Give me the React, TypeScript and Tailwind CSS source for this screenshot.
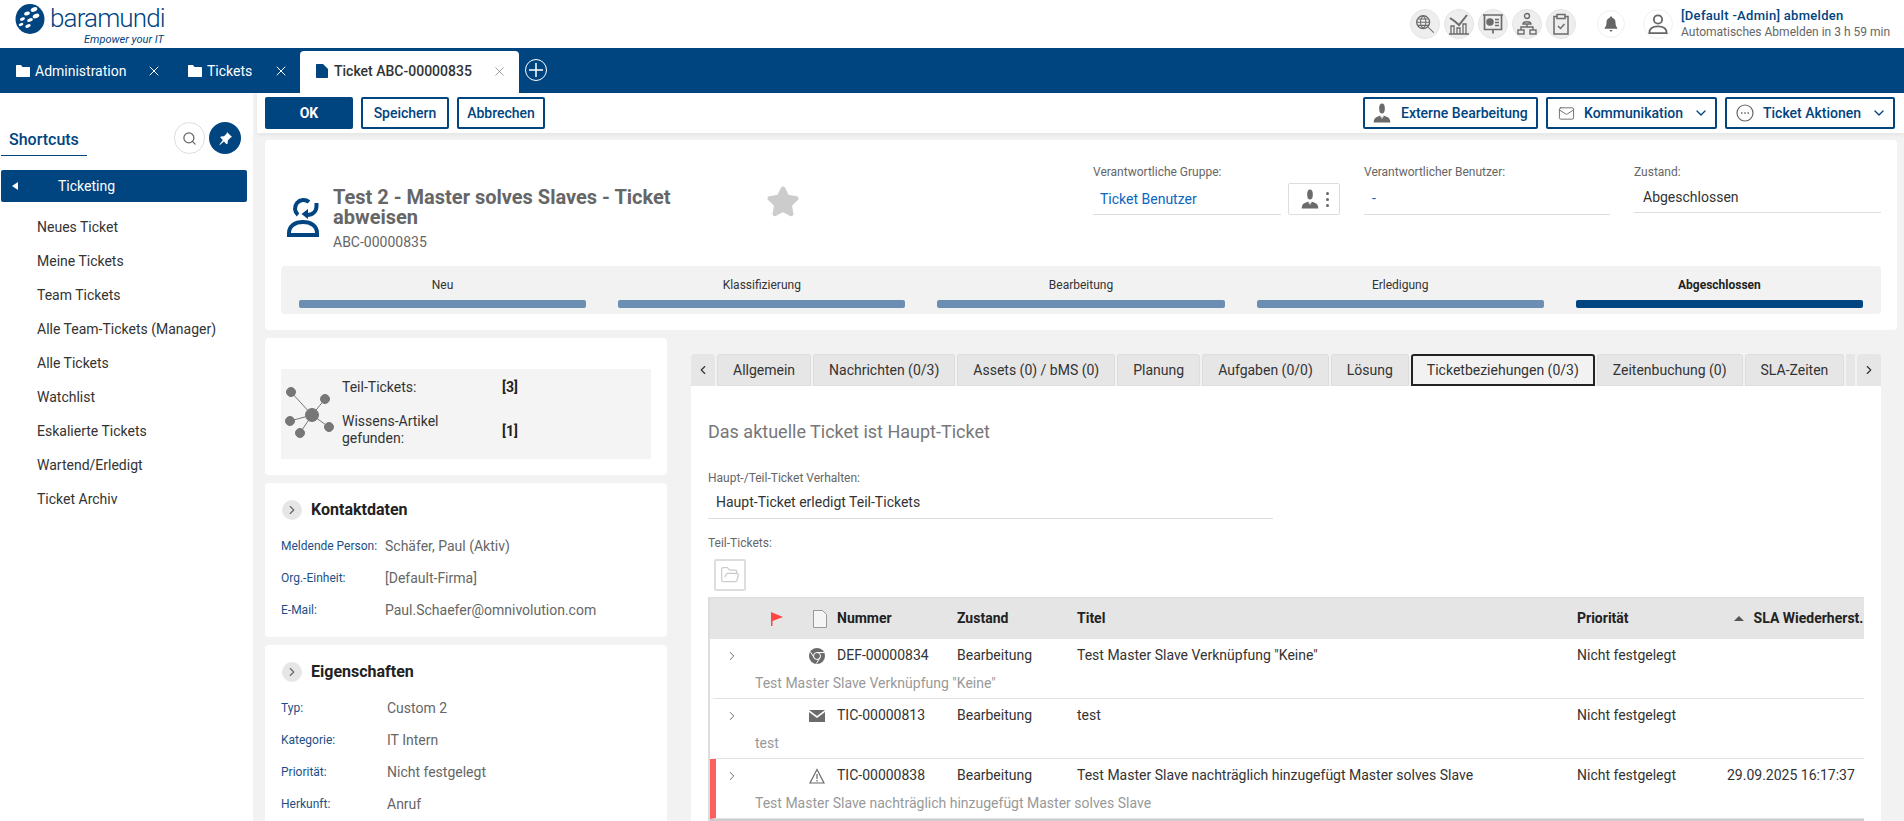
import React from 'react';
import { ChevronDown, ChevronLeft, ChevronRight, FolderOpen, Mail, Search, Star, X } from 'lucide-react';

const shortcuts = ['Neues Ticket', 'Meine Tickets', 'Team Tickets', 'Alle Team-Tickets (Manager)', 'Alle Tickets', 'Watchlist', 'Eskalierte Tickets', 'Wartend/Erledigt', 'Ticket Archiv'];
const phases = ['Neu', 'Klassifizierung', 'Bearbeitung', 'Erledigung', 'Abgeschlossen'];
const tabs = ['Allgemein', 'Nachrichten (0/3)', 'Assets (0) / bMS (0)', 'Planung', 'Aufgaben (0/0)', 'Lösung', 'Ticketbeziehungen (0/3)', 'Zeitenbuchung (0)', 'SLA-Zeiten'];

const contact = [
    ['Meldende Person:', 'Schäfer, Paul (Aktiv)'],
    ['Org.-Einheit:', '[Default-Firma]'],
    ['E-Mail:', 'Paul.Schaefer@omnivolution.com'],
];
const props = [
    ['Typ:', 'Custom 2'],
    ['Kategorie:', 'IT Intern'],
    ['Priorität:', 'Nicht festgelegt'],
    ['Herkunft:', 'Anruf'],
];

const rows = [
    { id: 'DEF-00000834', title: 'Test Master Slave Verknüpfung "Keine"', sla: '', kind: 'web', overdue: false },
    { id: 'TIC-00000813', title: 'test', sla: '', kind: 'mail', overdue: false },
    { id: 'TIC-00000838', title: 'Test Master Slave nachträglich hinzugefügt Master solves Slave', sla: '29.09.2025 16:17:37', kind: 'warn', overdue: true },
];

const Person = ({ className }: { className?: string }) => (
    <svg viewBox="0 0 24 24" className={className} fill="#6b6b6b">
        <ellipse cx="12" cy="6.500" rx="3.400" ry="6" />
        <path d="M2 23.500c0-4 1.500-6 4.500-7l3.500-1.500L12 17.500l2-2.500 3.500 1.500c3 1 4.500 3 4.500 7z" />
        <path d="M9.600 15L12 18.500 14.400 15" fill="none" stroke="#fff" strokeWidth="0.800" />
    </svg>
);

const Logo = () => (
    <svg viewBox="0 0 30 32" className="h-[32px] w-[30px]">
        <ellipse cx="15" cy="16" rx="14.500" ry="15" fill="#004480" />
        <g fill="#fff">
            <ellipse cx="19" cy="6.500" rx="3.400" ry="2.200" transform="rotate(-20 19 6.500)" />
            <ellipse cx="12" cy="10.500" rx="3" ry="1.800" transform="rotate(-20 12 10.500)" />
            <ellipse cx="21" cy="13" rx="3.400" ry="2.200" transform="rotate(-20 21 13)" />
            <ellipse cx="7.500" cy="16" rx="2.600" ry="1.500" transform="rotate(-20 7.500 16)" />
            <ellipse cx="15" cy="17" rx="3" ry="1.700" transform="rotate(-20 15 17)" />
            <ellipse cx="6" cy="21.500" rx="2.400" ry="1.400" transform="rotate(-20 6 21.500)" />
            <ellipse cx="13" cy="23" rx="2.800" ry="1.600" transform="rotate(-20 13 23)" />
        </g>
    </svg>
);

const TicketIcon = () => (
    <svg viewBox="0 0 32 40" className="h-[40px] w-[32px]" fill="none" stroke="#004480" strokeWidth="4">
        <path d="M2 38h28v-2c0-7-6-11-14-11S2 29 2 36z" />
        <path d="M22 5A8 8 0 1 0 11 18" />
        <path d="M29.500 6v3c0 5-3.500 9-9.500 9" />
        <path d="M21 12v10l-6.500-5z" fill="#004480" stroke="none" />
    </svg>
);

const HeaderIcons = [
    // globale suche
    <svg key="a" viewBox="0 0 24 24" className="h-[22px] w-[22px]" fill="none" stroke="#6b6b6b" strokeWidth="1.500">
        <circle cx="10" cy="10" r="7" />
        <path d="M15 15l6.500 6.500M3 10h14M10 3c-4 4-4 10 0 14M10 3c4 4 4 10 0 14M4.500 6.500h11M4.500 13.500h11" strokeWidth="1.100" />
    </svg>,
    <svg key="b" viewBox="0 0 24 24" className="h-[24px] w-[24px]" fill="none" stroke="#6b6b6b" strokeWidth="1.300">
        <path d="M2 22h20M4 22v-8h3v8M10 22v-6h3v6M16 22v-10h3v10" />
        <path d="M3 6l5 3.500L12 13l8-10" strokeWidth="2" />
    </svg>,
    <svg key="c" viewBox="0 0 24 24" className="h-[24px] w-[24px]" fill="none" stroke="#6b6b6b" strokeWidth="1.500">
        <path d="M2 3h20M3.500 3v14.500h17V3M12 17.500v4" strokeWidth="1.700" />
        <circle cx="9" cy="10" r="3" fill="#6b6b6b" />
        <path d="M14 7.500h4M14 10.500h4M14 13.500h4" />
    </svg>,
    <svg key="d" viewBox="0 0 24 24" className="h-[24px] w-[24px]" fill="none" stroke="#6b6b6b" strokeWidth="1.400">
        <circle cx="12" cy="4" r="2.500" />
        <path d="M8 12c0-3 8-3 8 0zM12 12v3M6 18v-3h12v3" />
        <rect x="3" y="18" width="6" height="4" />
        <rect x="15" y="18" width="6" height="4" />
    </svg>,
    <svg key="e" viewBox="0 0 24 24" className="h-[24px] w-[24px]" fill="none" stroke="#6b6b6b" strokeWidth="1.500">
        <path d="M8 4.500H5v17.500h14V4.500h-3" />
        <rect x="8" y="2.500" width="8" height="4" />
        <path d="M9 14l2.500 2.500L15.500 12" />
    </svg>,
];

const Network = () => (
    <svg viewBox="0 0 50 54" className="h-[54px] w-[50px]" fill="#777" stroke="#777" strokeWidth="1">
        <path d="M6 7l21 23M40 14L27 30M5 36l22-6M15 48l12-18M44 42L27 30" fill="none" />
        <circle cx="6" cy="7" r="4.500" />
        <circle cx="40" cy="14" r="4.500" />
        <circle cx="5" cy="36" r="4.500" />
        <circle cx="15" cy="48" r="4.500" />
        <circle cx="44" cy="42" r="4.500" />
        <circle cx="27" cy="30" r="6.500" />
    </svg>
);

const RowIcon = ({ kind }: { kind: string }) => {
    if (kind === 'mail') {
        return (
            <svg viewBox="0 0 16 12" className="h-[12px] w-[16px]" fill="#6b6b6b">
                <path d="M0 0h16L8 6z" />
                <path d="M0 2l8 6 8-6v10H0z" />
            </svg>
        );
    }
    if (kind === 'warn') {
        return (
            <svg viewBox="0 0 16 16" className="h-[16px] w-[16px]" fill="none" stroke="#6b6b6b" strokeWidth="1.200">
                <path d="M8 1.500L15 15H1z" />
                <path d="M8 6v5M8 12v1.500" />
            </svg>
        );
    }
    return (
        <svg viewBox="0 0 16 16" className="h-[16px] w-[16px]">
            <circle cx="8" cy="8" r="8" fill="#6b6b6b" />
            <circle cx="8" cy="8" r="3.500" fill="none" stroke="#fff" strokeWidth="1" />
            <path d="M8 4.500h7M5 9.500L1.500 4M11 9.500l-3.500 6" stroke="#fff" strokeWidth="1" />
        </svg>
    );
};

const Section = ({ title, items, valueClass }: { title: string; items: string[][]; valueClass: string }) => (
    <div className="rounded-[4px] bg-white pl-4 pt-4 pb-[11px]">
        <div className="flex h-[22px] items-center gap-[9px] pl-[1px]">
            <span className="flex h-5 w-5 items-center justify-center rounded-full bg-[#e6e6e6]">
                <ChevronRight size={14} color="#666" />
            </span>
            <h3 className="text-[16px] font-bold text-[#222]">{title}</h3>
        </div>
        <div className="mt-[9px]">
            {items.map(([label, value]) => (
                <div key={label} className="flex h-8 items-center">
                    <span className={`text-[12px] text-[#1d4f85] ${valueClass}`}>{label}</span>
                    <span className="text-[14px] text-[#666]">{value}</span>
                </div>
            ))}
        </div>
    </div>
);

const Folder = () => (
    <svg viewBox="0 0 14 12" className="h-[12px] w-[14px] shrink-0" fill="#fff">
        <path d="M0 1c0-.6.4-1 1-1h4l1.500 2H13c.6 0 1 .4 1 1v8c0 .6-.4 1-1 1H1c-.6 0-1-.4-1-1z" />
    </svg>
);

const App: React.FC = () => {
    return (
        <div className="flex h-[821px] w-[1904px] flex-col overflow-hidden bg-[#f2f2f2] font-[Roboto,sans-serif] text-[14px] text-[#333]">
            {/* kopfzeile */}
            <header className="flex h-[48px] shrink-0 items-start bg-white">
                <div className="relative ml-[15px] flex h-[48px] items-start pt-[3px]">
                    <Logo />
                    <span className="ml-[5px] mt-[-2px] text-[26px] font-light leading-[34px] tracking-[-0.85px] text-[#004480]">baramundi</span>
                    <span className="absolute left-[69px] top-[33px] whitespace-nowrap text-[11px] italic leading-[13px] text-[#004480]">Empower your IT</span>
                </div>
                <div className="ml-auto flex h-[48px] items-center">
                    <div className="flex gap-[4px]">
                        {HeaderIcons.map((icon, i) => (
                            <span key={i} className="flex h-[30px] w-[30px] items-center justify-center rounded-full border border-[#e4e4e4] bg-[#eeeeee]">
                                {icon}
                            </span>
                        ))}
                    </div>
                    <span className="ml-[21px] flex h-[28px] w-[28px] items-center justify-center rounded-full border border-[#f0f0f0]">
                        <svg viewBox="0 0 16 16" className="h-[16px] w-[16px]" fill="#666">
                            <path d="M8 0.500c.8 0 1.200.5 1.200 1.200 2.300.6 3.300 2.400 3.300 4.800 0 2.500.6 4 1.800 5.500v.8H1.700v-.8C2.900 10.500 3.500 9 3.500 6.500c0-2.400 1-4.200 3.300-4.800C6.800 1 7.200.500 8 .500zM6.500 14h3a1.500 1.500 0 0 1-3 0z" />
                        </svg>
                    </span>
                    <span className="ml-[18px] flex h-[30px] w-[30px] items-center justify-center rounded-full border border-[#f0f0f0]">
                        <svg viewBox="0 0 24 24" className="h-[22px] w-[22px]" fill="none" stroke="#666" strokeWidth="2">
                            <circle cx="12" cy="7" r="4.500" />
                            <path d="M2.500 22c0-5 4-7.500 9.500-7.500S21.500 17 21.500 22z" />
                        </svg>
                    </span>
                    <div className="ml-[8px] mr-[14px] w-[209px] leading-[17px]">
                        <div className="text-[13px] font-medium tracking-[0.3px] text-[#004480]">[Default -Admin] abmelden</div>
                        <div className="text-[12px] text-[#666]">Automatisches Abmelden in 3 h 59 min</div>
                    </div>
                </div>
            </header>

            {/* tab leiste */}
            <nav className="flex h-[45px] shrink-0 items-end bg-[#004480] text-white">
                <div className="flex h-[42px] w-[172px] items-center whitespace-nowrap pb-[2px] pl-[16px]">
                    <Folder />
                    <span className="ml-[5px]">Administration</span>
                    <X size={16} className="ml-[20px] shrink-0" strokeWidth={1.500} />
                </div>
                <div className="flex h-[42px] w-[128px] items-center whitespace-nowrap pb-[2px] pl-[16px]">
                    <Folder />
                    <span className="ml-[5px]">Tickets</span>
                    <X size={16} className="ml-[21px] shrink-0" strokeWidth={1.500} />
                </div>
                <div className="flex h-[42px] w-[219px] items-center rounded-t-[4px] bg-white pb-[2px] pl-[16px] text-[#333]">
                    <svg viewBox="0 0 12 14" className="h-[14px] w-[12px] shrink-0" fill="#004480"><path d="M0 1c0-.6.4-1 1-1h6l5 5v8c0 .6-.4 1-1 1H1c-.6 0-1-.4-1-1z" /></svg>
                    <span className="ml-[6px] font-medium">Ticket ABC-00000835</span>
                    <X size={15} className="ml-[20px] shrink-0" strokeWidth={1} color="#666" />
                </div>
                <div className="ml-[6px] flex h-[45px] items-center pb-[1px]">
                    <svg viewBox="0 0 22 22" className="h-[22px] w-[22px]" fill="none" stroke="#fff"><circle cx="11" cy="11" r="10.500" /><path d="M11 4v14M4 11h14" strokeWidth="1.500" /></svg>
                </div>
            </nav>

            <div className="flex min-h-0 flex-1">
                {/* shortcuts */}
                <aside className="w-[253px] shrink-0 bg-white">
                    <div className="relative h-[77px]">
                        <div className="absolute left-[1px] top-[35px] w-[86px] border-b border-[#004480] pb-[3px] pl-[8px] text-[16px] font-medium leading-[24px] text-[#004480]">Shortcuts</div>
                        <div className="absolute left-[174px] top-[29px] flex h-[32px] w-[31px] items-center justify-center rounded-full border border-[#ddd] bg-white">
                            <Search size={15} color="#666" />
                        </div>
                        <div className="absolute left-[209px] top-[29px] flex h-[32px] w-[32px] items-center justify-center rounded-full bg-[#004480]">
                            <svg viewBox="0 0 16 16" className="h-[15px] w-[15px]" fill="#fff">
                                <path d="M9.500 1l5.500 5.500-1.500.5-3 3-.3 3.500-1.200.5-2.700-2.700L2 15l-.5-.5 3.700-4.800L2.500 7l.5-1.200 3.500-.3 3-3z" />
                            </svg>
                        </div>
                    </div>
                    <div className="ml-[1px] flex h-[32px] w-[246px] items-center rounded-[2px] bg-[#004480] text-white">
                        <span className="ml-[11px] h-0 w-0 border-y-[4.500px] border-r-[6px] border-y-transparent border-r-white" />
                        <span className="ml-[40px]">Ticketing</span>
                    </div>
                    <ul className="mt-[8px]">
                        {shortcuts.map((s) => (
                            <li key={s} className="flex h-[34px] items-center pl-[37px]">{s}</li>
                        ))}
                    </ul>
                </aside>

                <main className="ml-[4px] flex min-w-0 flex-1 flex-col">
                    {/* aktionen */}
                    <div className="flex h-[40px] shrink-0 items-center bg-white pl-[8px] pr-[9px] shadow-[0_2px_4px_rgba(0,0,0,0.06)]">
                        <button className="h-[32px] w-[88px] rounded-[2px] bg-[#004480] font-bold text-white">OK</button>
                        <button className="ml-[8px] h-[32px] w-[88px] rounded-[2px] border-2 border-[#004480] font-medium text-[#004480]">Speichern</button>
                        <button className="ml-[8px] h-[32px] w-[88px] rounded-[2px] border-2 border-[#004480] font-medium text-[#004480]">Abbrechen</button>
                        <button className="ml-auto flex h-[32px] w-[175px] items-center rounded-[2px] border-2 border-[#004480] pl-[7px] font-medium text-[#004480]">
                            <Person className="h-[20px] w-[20px]" />
                            <span className="ml-[9px]">Externe Bearbeitung</span>
                        </button>
                        <button className="ml-[8px] flex h-[32px] w-[171px] items-center rounded-[2px] border-2 border-[#004480] pl-[10px] font-medium text-[#004480]">
                            <Mail size={17} color="#666" strokeWidth={1.300} />
                            <span className="ml-[9px]">Kommunikation</span>
                            <ChevronDown size={16} className="ml-[10px]" />
                        </button>
                        <button className="ml-[8px] flex h-[32px] w-[170px] items-center rounded-[2px] border-2 border-[#004480] pl-[9px] font-medium text-[#004480]">
                            <svg viewBox="0 0 18 18" className="h-[18px] w-[18px]" fill="none" stroke="#666" strokeWidth="1.200">
                                <circle cx="9" cy="9" r="8" />
                                <path d="M5 9h1.500M8.250 9h1.500M11.500 9H13" strokeWidth="1.700" />
                            </svg>
                            <span className="ml-[9px]">Ticket Aktionen</span>
                            <ChevronDown size={16} className="ml-[10px]" />
                        </button>
                    </div>

                    {/* ticket kopf */}
                    <section className="ml-[8px] mr-[7px] mt-[7px] h-[190px] shrink-0 rounded-[4px] bg-white px-[16px] pt-[16px]">
                        <div className="flex h-[110px]">
                            <div className="ml-[6px] mt-[41px]"><TicketIcon /></div>
                            <div className="ml-[14px] mt-[31px] w-[380px]">
                                <h1 className="text-[20px] font-bold leading-[20px] text-[#666]">Test 2 - Master solves Slaves - Ticket abweisen</h1>
                                <div className="mt-[5px] text-[14px] leading-[20px] text-[#666]">ABC-00000835</div>
                            </div>
                            <Star size={34} fill="#ccc" color="#ccc" className="ml-[53px] mt-[29px]" />
                            <div className="ml-[293px] w-[188px] pt-[8px]">
                                <div className="text-[12px] leading-[16px] text-[#666]">Verantwortliche Gruppe:</div>
                                <div className="mt-[3px] flex h-[32px] items-center border-b border-[#ddd] pl-[7px] pt-[1px] text-[#0a66c2]">Ticket Benutzer</div>
                            </div>
                            <div className="ml-[7px] mt-[27px] flex h-[32px] w-[52px] items-center justify-center rounded-[2px] border border-[#ddd]">
                                <Person className="h-[20px] w-[20px]" />
                                <span className="ml-[6px] flex flex-col gap-[3px]">
                                    <i className="h-[3px] w-[3px] rounded-full bg-[#666]" />
                                    <i className="h-[3px] w-[3px] rounded-full bg-[#666]" />
                                    <i className="h-[3px] w-[3px] rounded-full bg-[#666]" />
                                </span>
                            </div>
                            <div className="ml-[24px] w-[246px] pt-[8px]">
                                <div className="text-[12px] leading-[16px] text-[#666]">Verantwortlicher Benutzer:</div>
                                <div className="mt-[3px] flex h-[32px] items-center border-b border-[#ddd] pl-[8px] text-[#0a66c2]">-</div>
                            </div>
                            <div className="ml-[24px] w-[247px] pt-[8px]">
                                <div className="text-[12px] leading-[16px] text-[#666]">Zustand:</div>
                                <div className="mt-[1px] flex h-[32px] items-center border-b border-[#ddd] pl-[9px] pt-[1px]">Abgeschlossen</div>
                            </div>
                        </div>
                        <div className="grid h-[48px] grid-cols-5 gap-x-[32px] rounded-[4px] bg-[#f2f2f2] px-[18px]">
                            {phases.map((p, i) => (
                                <div key={p} className="flex flex-col items-center">
                                    <span className={`mt-[10px] text-[12px] leading-[18px] ${i === 4 ? 'font-bold text-[#222]' : 'text-[#333]'}`}>{p}</span>
                                    <span className={`mt-[6px] h-[8px] w-full rounded-[2px] ${i === 4 ? 'bg-[#004480]' : 'bg-[#6a8fb3]'}`} />
                                </div>
                            ))}
                        </div>
                    </section>

                    <div className="ml-[8px] mt-[8px] flex min-h-0 flex-1">
                        {/* linke spalte */}
                        <div className="flex w-[402px] shrink-0 flex-col gap-[8px]">
                            <div className="rounded-[4px] bg-white px-[16px] pb-[16px] pt-[31px]">
                                <div className="relative flex h-[90px] bg-[#f4f4f4] pl-[4px]">
                                    <div className="mt-[16px]"><Network /></div>
                                    <div className="ml-[7px] w-[160px] pt-[8px]">
                                        <div className="flex h-[28px]"><span>Teil-Tickets:</span></div>
                                        <div className="mt-[8px] leading-[17px]">Wissens-Artikel<br />gefunden:</div>
                                    </div>
                                    <div className="pt-[8px] font-bold text-[#222]">
                                        <div className="h-[28px]">[3]</div>
                                        <div className="mt-[16px]">[1]</div>
                                    </div>
                                </div>
                            </div>
                            <Section title="Kontaktdaten" items={contact} valueClass="w-[104px]" />
                            <Section title="Eigenschaften" items={props} valueClass="w-[106px]" />
                        </div>

                        {/* rechte spalte */}
                        <div className="ml-[24px] mr-[23px] mt-[16px] flex min-w-0 flex-1 flex-col">
                            <div className="flex h-[32px] shrink-0 overflow-hidden">
                                <span className="flex w-[24px] items-center justify-center rounded-t-[4px] bg-[#e6e6e6]"><ChevronLeft size={14} /></span>
                                <div className="ml-[2px] flex min-w-0 flex-1 gap-[2px] overflow-hidden">
                                    {tabs.map((t) => (
                                        <span
                                            key={t}
                                            className={
                                                t.startsWith('Ticketbeziehungen')
                                                    ? 'flex shrink-0 items-center rounded-t-[3px] border-2 border-[#222] bg-[#f2f2f2] px-[14px]'
                                                    : 'flex shrink-0 items-center rounded-t-[3px] border border-[#ddd] bg-[#e6e6e6] px-[15px]'
                                            }
                                        >
                                            {t}
                                        </span>
                                    ))}
                                    <span className="w-[9px] shrink-0 bg-[#e6e6e6]" />
                                </div>
                                <span className="ml-[2px] flex w-[24px] shrink-0 items-center justify-center rounded-t-[4px] bg-[#e6e6e6]"><ChevronRight size={14} /></span>
                            </div>
                            <div className="min-h-0 flex-1 bg-white pl-[17px] pr-[17px]">
                                <h2 className="mt-[33px] text-[18px] leading-[26px] text-[#777]">Das aktuelle Ticket ist Haupt-Ticket</h2>
                                <div className="mt-[26px] text-[12px] leading-[14px] text-[#666]">Haupt-/Teil-Ticket Verhalten:</div>
                                <div className="mt-[1px] flex h-[33px] w-[565px] items-center border-b border-[#ddd] pl-[8px]">Haupt-Ticket erledigt Teil-Tickets</div>
                                <div className="mt-[16px] text-[12px] leading-[16px] text-[#666]">Teil-Tickets:</div>
                                <div className="ml-[6px] mt-[8px] flex h-[32px] w-[32px] items-center justify-center rounded-[2px] border-2 border-[#ddd]">
                                    <FolderOpen size={20} color="#ccc" strokeWidth={1.500} />
                                </div>
                                <div className="mt-[6px] border-l-2 border-t border-[#ddd]">
                                    <div className="grid h-[41px] grid-cols-[97px_24px_120px_120px_500px_1fr] items-center overflow-hidden bg-[#e5e5e5] pl-[6px] font-bold text-[#222]">
                                        <span className="pl-[55px]">
                                            <svg viewBox="0 0 12 14" className="h-[14px] w-[12px]"><path d="M0 0l12 5-10.500 4v5H0z" fill="#f44" /></svg>
                                        </span>
                                        <span>
                                            <svg viewBox="0 0 14 18" className="h-[18px] w-[14px]" fill="#f5f5f5" stroke="#999"><path d="M.5.500h9l4 4v13H.5z" /></svg>
                                        </span>
                                        <span>Nummer</span>
                                        <span>Zustand</span>
                                        <span>Titel</span>
                                        <span className="flex items-center whitespace-nowrap">
                                            <span>Priorität</span>
                                            <span className="ml-[105px] h-0 w-0 border-x-[5px] border-b-[5px] border-x-transparent border-b-[#555]" />
                                            <span className="ml-[10px]">SLA Wiederherst.</span>
                                        </span>
                                    </div>
                                    {rows.map((r) => (
                                        <div key={r.id} className={`h-[60px] border-b border-[#e2e2e2] border-l-[6px] ${r.overdue ? 'border-l-[#f96060]' : 'border-l-transparent'}`}>
                                            <div className="grid h-[32px] grid-cols-[97px_24px_120px_120px_500px_1fr] items-center pt-[1px]">
                                                <span className="pl-[9px]"><ChevronRight size={14} color="#555" strokeWidth={1.500} /></span>
                                                <span className="-ml-[4px] flex"><RowIcon kind={r.kind} /></span>
                                                <span>{r.id}</span>
                                                <span>Bearbeitung</span>
                                                <span className="whitespace-nowrap">{r.title}</span>
                                                <span className="flex whitespace-nowrap">
                                                    <span className="w-[150px]">Nicht festgelegt</span>
                                                    <span>{r.sla}</span>
                                                </span>
                                            </div>
                                            <div className="pl-[39px] leading-[25px] text-[#999]">{r.title}</div>
                                        </div>
                                    ))}
                                    <div className="h-[3px] bg-[#ccc]" />
                                </div>
                            </div>
                        </div>
                    </div>
                </main>
            </div>
        </div>
    );
};

export default App;
